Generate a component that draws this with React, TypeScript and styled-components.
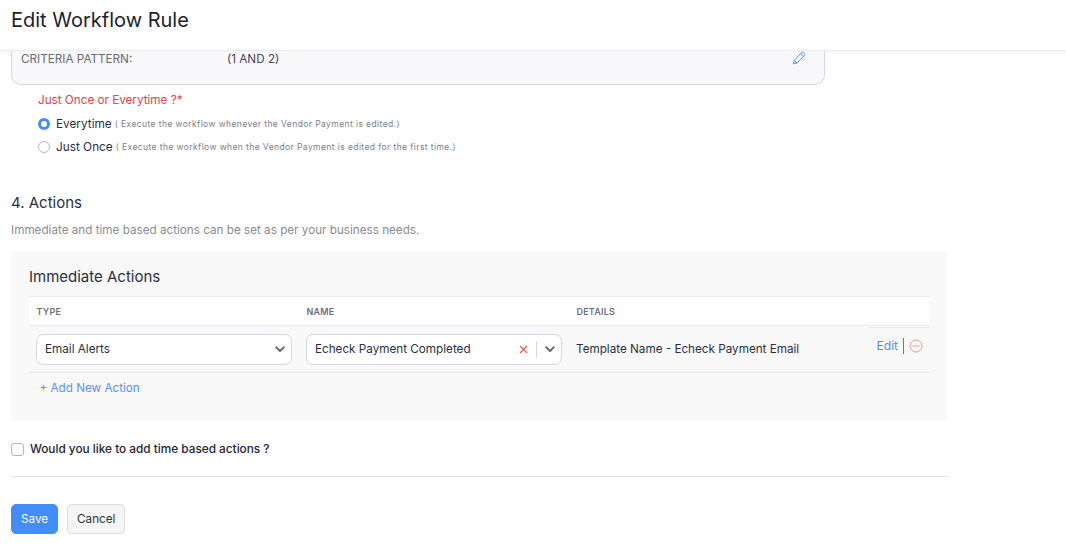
import styled, { createGlobalStyle } from "styled-components";

const GlobalStyle = createGlobalStyle`
  html, body {
    margin: 0;
    padding: 0;
    background: #fff;
    overflow: hidden;
  }
  body {
    font-family: Inter, "Liberation Sans", sans-serif;
    color: #21263c;
  }
`;

const Page = styled.div`
  width: 1066px;
  height: 547px;
  overflow: hidden;
`;

const Header = styled.header`
  height: 51px;
  box-sizing: border-box;
  padding: 7px 11px 0;
  border-bottom: 1px solid #ebebef;
  box-shadow: 0 2px 4px rgba(0, 0, 0, 0.04);
`;

const Title = styled.h1`
  margin: 0;
  font-size: 20px;
  line-height: 26px;
  font-weight: 400;
  color: #1b1f2e;
`;

const Body = styled.main`
  padding-left: 11px;
  width: 936px;
`;

const CriteriaCard = styled.div`
  width: 814px;
  height: 34px;
  box-sizing: border-box;
  padding: 0 18px 0 9px;
  display: flex;
  align-items: flex-start;
  background: #f8f8fb;
  border: 1px solid #d8d6e6;
  border-top: 0;
  border-radius: 0 0 10px 10px;
  font-size: 11.7px;
  line-height: 16px;
  color: #6b6b76;
`;

const CriteriaLabel = styled.span`
  width: 206px;
`;

const CriteriaValue = styled.span`
  flex: 1;
  color: #444754;
`;

const PencilButton = styled.span`
  display: flex;
  color: #4d94f8;
`;

const ExecSection = styled.section`
  padding: 7px 0 0 27px;
`;

const RedLabel = styled.div`
  font-size: 11.7px;
  line-height: 16px;
  color: #e4434b;
  margin-bottom: 4px;
`;

const RadioRow = styled.label`
  display: flex;
  align-items: center;
  height: 23px;
  font-size: 11.8px;
  color: #2b2f3f;
`;

const RadioDot = styled.span<{ $on?: boolean }>`
  width: 12px;
  height: 12px;
  margin-right: 6px;
  border-radius: 50%;
  box-sizing: border-box;
  background: #fff;
  border: ${(p) => (p.$on ? "3.5px solid #408dfb" : "1px solid #b9b9be")};
`;

const Hint = styled.span`
  margin-left: 3px;
  font-size: 8.5px;
  letter-spacing: 0.41px;
  color: #7d7d88;
`;

const SectionTitle = styled.h2`
  margin: 35px 0 0;
  font-size: 15px;
  line-height: 20px;
  font-weight: 400;
  color: #2b2f3f;
`;

const SectionHint = styled.p`
  margin: 9px 0 0;
  font-size: 11.7px;
  line-height: 16px;
  color: #8b8b92;
`;

const ActionsPanel = styled.section`
  margin-top: 13px;
  height: 170px;
  box-sizing: border-box;
  padding: 16px 18px 0;
  background: #f9f9fa;
`;

const PanelTitle = styled.h3`
  margin: 0 0 9px;
  font-size: 15px;
  line-height: 20px;
  font-weight: 400;
  color: #2b2f3f;
`;

const ColumnGrid = styled.div`
  display: grid;
  grid-template-columns: 270px 270px 1fr;
`;

const HeadRow = styled(ColumnGrid)`
  height: 28px;
  align-items: center;
  background: #fff;
  border-top: 1px solid #ebebf3;
  border-bottom: 1px solid #ebebf3;
`;

const HeadCell = styled.div`
  padding-left: 7.5px;
  font-size: 9px;
  font-weight: 600;
  letter-spacing: 0.2px;
  color: #6f6f7a;
`;

const ActionRow = styled(ColumnGrid)`
  position: relative;
  height: 46px;
  align-items: center;
  border-bottom: 1px solid #e8e8ef;

  &::after {
    content: "";
    position: absolute;
    top: 1px;
    right: 0;
    width: 60px;
    height: 1px;
    background: #e8e8ef;
  }
`;

const Cell = styled.div`
  padding-left: 7px;
  min-width: 0;
`;

const SelectBox = styled.div`
  width: 256px;
  height: 31px;
  box-sizing: border-box;
  padding: 0 5px 0 8px;
  display: flex;
  align-items: center;
  background: #fff;
  border: 1px solid #d8d6e6;
  border-radius: 7px;
  font-size: 11.7px;
  color: #2b2f3f;
`;

const SelectText = styled.span`
  flex: 1;
`;

const ClearIcon = styled.span`
  display: flex;
  color: #ec5a5f;
  margin-right: 8px;
`;

const SelectDivider = styled.span`
  width: 1px;
  height: 17px;
  background: #d8d8dd;
  margin-right: 7px;
`;

const Chevron = styled.span`
  display: flex;
  color: #6d6d78;
`;

const DetailsCell = styled.div`
  display: flex;
  align-items: center;
  padding-left: 7px;
  font-size: 11.7px;
  color: #2b2f3f;
`;

const DetailsText = styled.span`
  flex: 1;
`;

const RowActions = styled.div`
  display: flex;
  align-items: center;
  gap: 5px;
  margin: -7px 6px 0 0;
`;

const EditLink = styled.span`
  font-size: 12px;
  color: #4f8ff5;
`;

const ActionDivider = styled.span`
  width: 1px;
  height: 16px;
  background: #8a7a3c;
`;

const RemoveIcon = styled.span`
  display: flex;
  color: #ee9a9a;
`;

const AddLink = styled.div`
  padding: 7px 0 0 10.5px;
  font-size: 11.7px;
  line-height: 16px;
  color: #5a93ee;
`;

const CheckRow = styled.label`
  display: flex;
  align-items: center;
  margin-top: 20px;
  height: 16px;
  font-size: 11.8px;
  font-weight: 500;
  color: #1f2333;
`;

const CheckBox = styled.span`
  width: 13px;
  height: 13px;
  margin-right: 6px;
  box-sizing: border-box;
  border: 1px solid #b5b5ba;
  border-radius: 3px;
  background: #fff;
`;

const Rule = styled.hr`
  margin: 19px 0 0;
  border: 0;
  border-top: 1px solid #e4e4e7;
`;

const ButtonRow = styled.div`
  display: flex;
  gap: 9px;
  margin-top: 27px;
`;

const Button = styled.button<{ $primary?: boolean }>`
  height: 30px;
  box-sizing: border-box;
  padding: 0 9px;
  font-family: inherit;
  font-size: 11.7px;
  border-radius: 5px;
  border: 1px solid ${(p) => (p.$primary ? "#408dfb" : "#dcdcdf")};
  background: ${(p) => (p.$primary ? "#408dfb" : "#f5f5f5")};
  color: ${(p) => (p.$primary ? "#fff" : "#33333d")};
`;

function PencilIcon() {
  return (
    <svg width="14" height="14" viewBox="0 0 14 14" fill="none" stroke="currentColor" strokeWidth="1">
      <path d="M1.5 12.8 2.2 9.4 9.6 1.6a1.3 1.3 0 0 1 1.9 0l.9.9a1.3 1.3 0 0 1 0 1.9L5 12 1.5 12.8Z" />
      <path d="M2.2 9.4 5 12M8.6 2.7l2.8 2.8" />
    </svg>
  );
}

function ChevronIcon() {
  return (
    <svg width="12" height="12" viewBox="0 0 12 12" fill="none" stroke="currentColor" strokeWidth="2" strokeLinecap="round" strokeLinejoin="round">
      <path d="M2.2 4.2 6 8l3.8-3.8" />
    </svg>
  );
}

function CrossIcon() {
  return (
    <svg width="9" height="9" viewBox="0 0 9 9" fill="none" stroke="currentColor" strokeWidth="1.2">
      <path d="M1 1l7 7M8 1 1 8" />
    </svg>
  );
}

function MinusCircleIcon() {
  return (
    <svg width="14" height="14" viewBox="0 0 14 14" fill="none" stroke="currentColor" strokeWidth="1">
      <circle cx="7" cy="7" r="6" />
      <path d="M3.5 7h7" />
    </svg>
  );
}

export default function App() {
  return (
    <Page>
      <GlobalStyle />
      <Header>
        <Title>Edit Workflow Rule</Title>
      </Header>
      <Body>
        <CriteriaCard>
          <CriteriaLabel>CRITERIA PATTERN:</CriteriaLabel>
          <CriteriaValue>(1 AND 2)</CriteriaValue>
          <PencilButton>
            <PencilIcon />
          </PencilButton>
        </CriteriaCard>

        <ExecSection>
          <RedLabel>Just Once or Everytime ?*</RedLabel>
          <RadioRow>
            <RadioDot $on />
            Everytime
            <Hint>( Execute the workflow whenever the Vendor Payment is edited.)</Hint>
          </RadioRow>
          <RadioRow>
            <RadioDot />
            Just Once
            <Hint>( Execute the workflow when the Vendor Payment is edited for the first time.)</Hint>
          </RadioRow>
        </ExecSection>

        <SectionTitle>4. Actions</SectionTitle>
        <SectionHint>Immediate and time based actions can be set as per your business needs.</SectionHint>

        <ActionsPanel>
          <PanelTitle>Immediate Actions</PanelTitle>
          <HeadRow>
            <HeadCell>TYPE</HeadCell>
            <HeadCell>NAME</HeadCell>
            <HeadCell>DETAILS</HeadCell>
          </HeadRow>
          <ActionRow>
            <Cell>
              <SelectBox>
                <SelectText>Email Alerts</SelectText>
                <Chevron>
                  <ChevronIcon />
                </Chevron>
              </SelectBox>
            </Cell>
            <Cell>
              <SelectBox>
                <SelectText>Echeck Payment Completed</SelectText>
                <ClearIcon>
                  <CrossIcon />
                </ClearIcon>
                <SelectDivider />
                <Chevron>
                  <ChevronIcon />
                </Chevron>
              </SelectBox>
            </Cell>
            <DetailsCell>
              <DetailsText>Template Name - Echeck Payment Email</DetailsText>
              <RowActions>
                <EditLink>Edit</EditLink>
                <ActionDivider />
                <RemoveIcon>
                  <MinusCircleIcon />
                </RemoveIcon>
              </RowActions>
            </DetailsCell>
          </ActionRow>
          <AddLink>+ Add New Action</AddLink>
        </ActionsPanel>

        <CheckRow>
          <CheckBox />
          Would you like to add time based actions ?
        </CheckRow>
        <Rule />
        <ButtonRow>
          <Button $primary>Save</Button>
          <Button>Cancel</Button>
        </ButtonRow>
      </Body>
    </Page>
  );
}
